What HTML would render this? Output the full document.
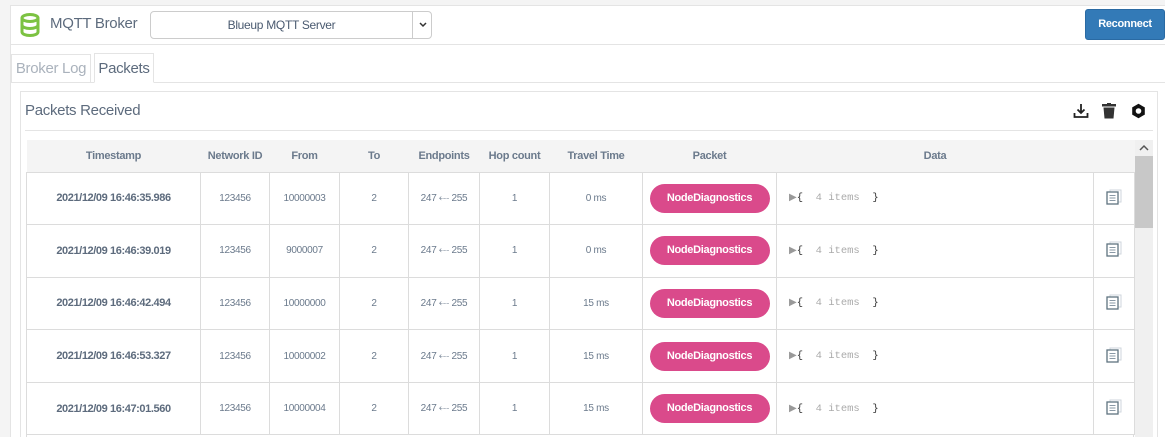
<!DOCTYPE html>
<html><head><meta charset="utf-8"><style>
*{box-sizing:border-box;margin:0;padding:0}
html,body{width:1165px;height:437px;overflow:hidden}
body{background:#f4f4f4;font-family:"Liberation Sans",sans-serif;color:#5d6b7d;position:relative;letter-spacing:-0.3px}
.abs{position:absolute;white-space:nowrap}
#wrap{position:absolute;left:0;top:0;width:1165px;height:437px;overflow:hidden}
#main{left:10px;top:5px;width:1155px;height:432px;background:#fff;border-top:1px solid #e4e4e4;border-left:1px solid #e4e4e4}
table{border-collapse:collapse;table-layout:fixed;position:absolute;left:26px;top:140px;width:1108px}
th{background:#f4f4f4;height:32px;font-size:11px;font-weight:bold;color:#6b7a8c;text-align:center;white-space:nowrap}
td{height:52.6px;border:1px solid #dcdcdc;text-align:center;font-size:10px;color:#6b7a8c;white-space:nowrap}
td.ts{font-weight:bold;font-size:11px;color:#5d6b7d;letter-spacing:-0.4px}
.pill{display:inline-block;width:120px;height:29px;line-height:29px;border-radius:15px;background:#da4a8b;color:#fff;font-weight:bold;font-size:11px}
.data{text-align:left;padding-left:12px;font-family:"Liberation Mono",monospace;font-size:10.5px;color:#333;letter-spacing:0}
.data .tri{color:#999;font-family:"Liberation Sans",sans-serif;font-size:10px}
.data .g{color:#aaa}
</style></head><body><div id="wrap">
<div id="main" class="abs"></div>
<svg class="abs" style="left:19px;top:13px" width="22" height="24" viewBox="0 0 22 24"><g fill="none" stroke="#7cc242" stroke-width="3"><ellipse cx="11" cy="5" rx="8" ry="3.5"/><path d="M3 5v14c0 2 3.5 3.5 8 3.5s8-1.5 8-3.5V5M3 12c0 2 3.5 3.5 8 3.5s8-1.5 8-3.5"/></g></svg>
<div class="abs" style="left:50px;top:15px;font-size:15px;color:#5d6b7d">MQTT Broker</div>
<div class="abs" style="left:150px;top:11px;width:282px;height:28px;border:1px solid #ccc;border-radius:4px;font-size:12px;line-height:26px"><span style="position:absolute;left:0;width:261px;text-align:center;color:#4a5a70">Blueup MQTT Server</span><span style="position:absolute;left:261px;top:0;height:26px;border-left:1px solid #ccc;width:20px;text-align:center"><svg width="10" height="26" viewBox="0 0 10 26"><path d="M2 11l3 3 3-3" fill="none" stroke="#333" stroke-width="1.5"/></svg></span></div>
<div class="abs" style="left:1085px;top:9px;width:80px;height:31px;background:#337ab7;border:1px solid #2a6aa3;border-radius:3px;color:#fff;font-weight:bold;font-size:11px;line-height:29px;text-align:center">Reconnect</div>
<div class="abs" style="left:11px;top:44px;width:1154px;border-top:1px solid #e4e4e4"></div>
<div class="abs" style="left:11px;top:82px;width:1154px;border-top:1px solid #e4e4e4"></div>
<div class="abs" style="left:11px;top:54px;width:80px;height:29px;border:1px solid #e4e4e4;border-bottom:none;font-size:15px;color:#aab2bc;text-align:center;line-height:28px">Broker Log</div>
<div class="abs" style="left:94px;top:53px;width:60px;height:30px;border:1px solid #e4e4e4;border-bottom:1px solid #fff;background:#fff;font-size:15px;color:#5d6b7d;text-align:center;line-height:30px">Packets</div>
<div class="abs" style="left:20px;top:91px;width:1138px;height:346px;border:1px solid #e4e4e4;border-bottom:none"></div>
<div class="abs" style="left:25px;top:102px;font-size:15px;color:#5d6b7d">Packets Received</div>
<div class="abs" style="left:25px;top:130px;width:1128px;border-top:1px solid #e4e4e4"></div>
<svg class="abs" style="left:1073px;top:103px" width="16" height="16" viewBox="0 0 16 16"><path d="M8 1v9M4.5 6.5L8 10l3.5-3.5M1.5 10v4h13v-4" fill="none" stroke="#222" stroke-width="1.8"/></svg>
<svg class="abs" style="left:1102px;top:103px" width="14" height="16" viewBox="0 0 14 16"><rect x="0" y="1" width="14" height="2.5" fill="#333"/><rect x="5" y="0" width="4" height="2" fill="#333"/><path d="M1.5 4.5h11l-1 11h-9z" fill="#333"/></svg>
<svg class="abs" style="left:1131px;top:103px" width="15" height="16" viewBox="0 0 15 16"><path d="M7.5 0.8l6.3 3.6v7.2l-6.3 3.6-6.3-3.6V4.4z" fill="#111"/><circle cx="7.5" cy="8" r="2.8" fill="#fff"/></svg>
<table>
<colgroup><col style="width:174px"><col style="width:69px"><col style="width:70px"><col style="width:69px"><col style="width:71px"><col style="width:70px"><col style="width:93px"><col style="width:134px"><col style="width:317px"><col style="width:41px"></colgroup>
<tr><th>Timestamp</th><th>Network ID</th><th>From</th><th>To</th><th>Endpoints</th><th>Hop count</th><th>Travel Time</th><th>Packet</th><th>Data</th><th></th></tr>
<tr><td class="ts">2021/12/09 16:46:35.986</td><td>123456</td><td>10000003</td><td>2</td><td>247 ⤎ 255</td><td>1</td><td>0 ms</td><td><span class="pill">NodeDiagnostics</span></td><td class="data"><span class="tri">▶</span>{ &nbsp;<span class="g">4 items</span> &nbsp;}</td><td><svg width="16" height="16"><rect x="4" y="1" width="11" height="12" fill="none" stroke="#cfd6dc"/><rect x="1" y="3" width="11" height="12" fill="#fff" stroke="#5f7380" stroke-width="1.3"/><path d="M3.5 6.5h6M3.5 9h6M3.5 11.5h6" stroke="#8a99a6"/></svg></td></tr>
<tr><td class="ts">2021/12/09 16:46:39.019</td><td>123456</td><td>9000007</td><td>2</td><td>247 ⤎ 255</td><td>1</td><td>0 ms</td><td><span class="pill">NodeDiagnostics</span></td><td class="data"><span class="tri">▶</span>{ &nbsp;<span class="g">4 items</span> &nbsp;}</td><td><svg width="16" height="16"><rect x="4" y="1" width="11" height="12" fill="none" stroke="#cfd6dc"/><rect x="1" y="3" width="11" height="12" fill="#fff" stroke="#5f7380" stroke-width="1.3"/><path d="M3.5 6.5h6M3.5 9h6M3.5 11.5h6" stroke="#8a99a6"/></svg></td></tr>
<tr><td class="ts">2021/12/09 16:46:42.494</td><td>123456</td><td>10000000</td><td>2</td><td>247 ⤎ 255</td><td>1</td><td>15 ms</td><td><span class="pill">NodeDiagnostics</span></td><td class="data"><span class="tri">▶</span>{ &nbsp;<span class="g">4 items</span> &nbsp;}</td><td><svg width="16" height="16"><rect x="4" y="1" width="11" height="12" fill="none" stroke="#cfd6dc"/><rect x="1" y="3" width="11" height="12" fill="#fff" stroke="#5f7380" stroke-width="1.3"/><path d="M3.5 6.5h6M3.5 9h6M3.5 11.5h6" stroke="#8a99a6"/></svg></td></tr>
<tr><td class="ts">2021/12/09 16:46:53.327</td><td>123456</td><td>10000002</td><td>2</td><td>247 ⤎ 255</td><td>1</td><td>15 ms</td><td><span class="pill">NodeDiagnostics</span></td><td class="data"><span class="tri">▶</span>{ &nbsp;<span class="g">4 items</span> &nbsp;}</td><td><svg width="16" height="16"><rect x="4" y="1" width="11" height="12" fill="none" stroke="#cfd6dc"/><rect x="1" y="3" width="11" height="12" fill="#fff" stroke="#5f7380" stroke-width="1.3"/><path d="M3.5 6.5h6M3.5 9h6M3.5 11.5h6" stroke="#8a99a6"/></svg></td></tr>
<tr><td class="ts">2021/12/09 16:47:01.560</td><td>123456</td><td>10000004</td><td>2</td><td>247 ⤎ 255</td><td>1</td><td>15 ms</td><td><span class="pill">NodeDiagnostics</span></td><td class="data"><span class="tri">▶</span>{ &nbsp;<span class="g">4 items</span> &nbsp;}</td><td><svg width="16" height="16"><rect x="4" y="1" width="11" height="12" fill="none" stroke="#cfd6dc"/><rect x="1" y="3" width="11" height="12" fill="#fff" stroke="#5f7380" stroke-width="1.3"/><path d="M3.5 6.5h6M3.5 9h6M3.5 11.5h6" stroke="#8a99a6"/></svg></td></tr>
</table>
<div class="abs" style="left:26px;top:434px;width:1108px;height:3px;border-left:1px solid #dcdcdc;border-right:1px solid #dcdcdc"></div>
<div class="abs" style="left:1135px;top:140px;width:18px;height:297px;background:#f0f0f0"></div>
<div class="abs" style="left:1135px;top:156px;width:18px;height:72px;background:#c8c8c8"></div>
<svg class="abs" style="left:1135px;top:140px" width="18" height="16"><path d="M5 10l4-4 4 4" fill="none" stroke="#555" stroke-width="1.5"/></svg>
</div></body></html>
